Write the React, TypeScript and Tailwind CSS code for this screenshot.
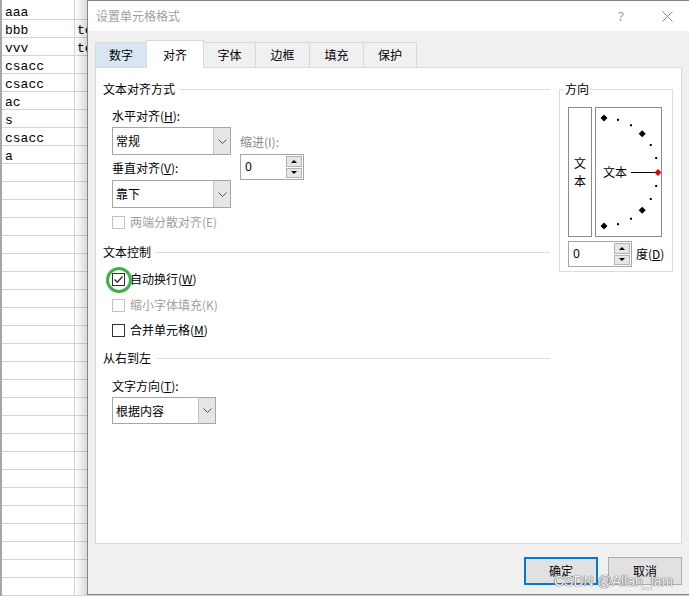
import React from "react";

const ui = "font-['Noto_Sans_CJK_SC','Noto_Sans',sans-serif]";

const colA = ["aaa", "bbb", "vvv", "csacc", "csacc", "ac", "s", "csacc", "a"];
const colB = ["", "test", "test"];

function Sheet() {
	const rows = Array.from({ length: 33 }, (_, i) => i);
	const cols = Array.from({ length: 8 }, (_, i) => i);
	return (
		<div className="flex flex-col border-l-2 border-[#a6a6a6] font-['Liberation_Mono',monospace] text-[13px] leading-[13px] text-black">
			{rows.map((r) => (
				<div key={r} className={`flex border-b border-[#d4d4d4] ${r === 0 ? "h-[20px]" : "h-[18px]"}`}>
					<div className="flex w-[73px] shrink-0 items-end overflow-hidden border-r border-[#d4d4d4] pl-[3px]">{colA[r] ?? ""}</div>
					<div className="flex w-[72px] shrink-0 items-end overflow-hidden border-r border-[#d4d4d4] pl-[2px]">{colB[r] ?? ""}</div>
					{cols.map((c) => (
						<div key={c} className="w-[72px] shrink-0 border-r border-[#d4d4d4]" />
					))}
				</div>
			))}
		</div>
	);
}

function Chevron() {
	return (
		<svg width="9" height="5" viewBox="0 0 9 5">
			<polyline points="0.5,0.5 4.5,4.5 8.5,0.5" fill="none" stroke="#555" strokeWidth="1" />
		</svg>
	);
}

function Combo({ value, w, h = "h-[28px]" }: { value: string; w: string; h?: string }) {
	return (
		<div className={`flex border border-[#a6a6a6] bg-white ${w} ${h}`}>
			<span className="flex flex-1 items-center pl-[3px]">{value}</span>
			<span className="flex w-[17px] items-center justify-center border-l border-[#c2c2c2] bg-[#e5e5e5]">
				<Chevron />
			</span>
		</div>
	);
}

function Spin() {
	return (
		<div className="flex h-[26px] w-[64px] border border-[#a6a6a6] bg-white">
			<span className="flex flex-1 items-center pl-[4px] font-['Noto_Sans',sans-serif]">0</span>
			<div className="flex w-[17px] flex-col gap-px py-px pr-px">
				<span className="flex flex-1 items-center justify-center border border-[#b4b4b4] bg-[#e6e6e6]">
					<svg width="6" height="3" viewBox="0 0 6 3">
						<polygon points="0,3 3,0 6,3" fill="#000" />
					</svg>
				</span>
				<span className="flex flex-1 items-center justify-center border border-[#b4b4b4] bg-[#e6e6e6]">
					<svg width="6" height="3" viewBox="0 0 6 3">
						<polygon points="0,0 6,0 3,3" fill="#000" />
					</svg>
				</span>
			</div>
		</div>
	);
}

function Header({ label, mt }: { label: string; mt: string }) {
	return (
		<div className={`flex h-[16px] items-center gap-[5px] ${mt}`}>
			<span>{label}</span>
			<span className="h-px flex-1 bg-[#dcdcdc]" />
		</div>
	);
}

function Check({ label, checked, disabled, circled, mt }: { label: React.ReactNode; checked?: boolean; disabled?: boolean; circled?: boolean; mt: string }) {
	return (
		<div className={`flex h-[16px] items-center ${mt} ${disabled ? "text-[#a0a0a0]" : ""}`}>
			<span className={`relative flex h-[13px] w-[13px] items-center justify-center border bg-white ${disabled ? "border-[#c3c3c3]" : "border-[#333]"}`}>
				{checked && (
					<svg width="11" height="11" viewBox="0 0 11 11">
						<polyline points="1.5,5.5 4.3,8.3 9.5,2.5" fill="none" stroke="#333" strokeWidth="1.4" />
					</svg>
				)}
				{circled && <span className="absolute -left-[7px] -top-[7px] h-[26px] w-[26px] rounded-full border-[3.5px] border-[#3cb14a]" />}
			</span>
			<span className="ml-[5px]">{label}</span>
		</div>
	);
}

function Dial() {
	const cx = 8;
	const cy = 64;
	const r = 54;
	const pt = (a: number) => [cx + r * Math.cos((a * Math.PI) / 180), cy - r * Math.sin((a * Math.PI) / 180)];
	const diamonds = [90, 45, -45, -90];
	const dots = [75, 60, 30, 15, -15, -30, -60, -75];
	const dia = (x: number, y: number) => `${x},${y - 3.5} ${x + 3.5},${y} ${x},${y + 3.5} ${x - 3.5},${y}`;
	return (
		<div className="relative h-[130px] w-[67px] border border-[#8c8c8c] bg-white">
			<svg className="absolute inset-0" width="65" height="128" viewBox="0 0 65 128">
				{diamonds.map((a) => {
					const [x, y] = pt(a);
					return <polygon key={a} points={dia(x, y)} fill="#000" />;
				})}
				{dots.map((a) => {
					const [x, y] = pt(a);
					return <rect key={a} x={x - 1} y={y - 1} width="2" height="2" fill="#000" />;
				})}
				<line x1="35" y1="64.5" x2="59" y2="64.5" stroke="#000" strokeWidth="1" />
				<polygon points={dia(62, 64.5)} fill="#e00000" />
			</svg>
			<span className="absolute left-[7px] top-[56px] leading-[16px]">文本</span>
		</div>
	);
}

export default function App() {
	return (
		<div className={`relative h-[598px] w-[689px] overflow-hidden bg-white ${ui} text-[12px] leading-[16px] text-black`}>
			<Sheet />
			<div className="absolute left-[75px] top-0 h-[595px] w-[12px] bg-linear-to-r from-black/0 to-black/15" />

			<div className="absolute left-[87px] top-0 flex h-[595px] w-[613px] flex-col border border-[#858585] bg-[#f0f0f0]">
				<div className="flex h-[30px] shrink-0 items-center bg-white pr-[9px]">
					<span className="pl-[8px] text-[#a0a0a0]">设置单元格格式</span>
					<span className="ml-auto w-[46px] text-center font-['Noto_Sans',sans-serif] text-[13px] text-[#9a9a9a]">?</span>
					<span className="flex w-[46px] justify-center">
						<svg width="11" height="11" viewBox="0 0 11 11">
							<path d="M0.5 0.5 L10.5 10.5 M10.5 0.5 L0.5 10.5" stroke="#8a8a8a" strokeWidth="1" />
						</svg>
					</span>
				</div>

				<div className="flex flex-col pl-[7px] pt-[9px]">
					<div className="relative z-10 flex h-[27px] items-end">
						<span className="flex h-[25px] w-[52px] items-center justify-center border border-b-0 border-[#d9d9d9] bg-[#d8e6f3]">数字</span>
						<span className="-mb-px -ml-px flex h-[28px] w-[58px] items-center justify-center border border-b-0 border-[#d9d9d9] bg-white">对齐</span>
						<span className="-ml-px flex h-[25px] w-[53px] items-center justify-center border border-b-0 border-[#d9d9d9]">字体</span>
						<span className="-ml-px flex h-[25px] w-[55px] items-center justify-center border border-b-0 border-[#d9d9d9]">边框</span>
						<span className="-ml-px flex h-[25px] w-[55px] items-center justify-center border border-b-0 border-[#d9d9d9]">填充</span>
						<span className="-ml-px flex h-[25px] w-[54px] items-center justify-center border border-b-0 border-[#d9d9d9]">保护</span>
					</div>

					<div className="flex h-[477px] w-[587px] items-start gap-[9px] border border-[#d9d9d9] bg-white pl-[7px] pt-[13px]">
						<div className="flex w-[447px] flex-col">
							<Header label="文本对齐方式" mt="" />
							<div className="flex flex-col pl-[9px]">
								<div className="mt-[11px] flex h-[16px] items-center">
									水平对齐(<u>H</u>):
								</div>
								<div className="flex gap-[9px]">
									<div className="flex flex-col">
										<div className="mt-[3px]">
											<Combo value="常规" w="w-[119px]" />
										</div>
										<div className="mt-[5px] flex h-[16px] items-center">
											垂直对齐(<u>V</u>):
										</div>
										<div className="mt-[4px]">
											<Combo value="靠下" w="w-[119px]" />
										</div>
									</div>
									<div className="flex flex-col">
										<div className="mt-[10px] flex h-[16px] items-center text-[#8a8a8a]">缩进(I):</div>
										<div className="mt-[4px]">
											<Spin />
										</div>
									</div>
								</div>
								<Check label="两端分散对齐(E)" disabled mt="mt-[6px]" />
							</div>

							<Header label="文本控制" mt="mt-[14px]" />
							<div className="flex flex-col pl-[9px]">
								<Check label={<>自动换行(<u>W</u>)</>} checked circled mt="mt-[11px]" />
								<Check label="缩小字体填充(K)" disabled mt="mt-[10px]" />
								<Check label={<>合并单元格(<u>M</u>)</>} mt="mt-[9px]" />
							</div>

							<Header label="从右到左" mt="mt-[12px]" />
							<div className="flex flex-col pl-[9px]">
								<div className="mt-[12px] flex h-[16px] items-center">
									文字方向(<u>T</u>):
								</div>
								<div className="mt-[3px]">
									<Combo value="根据内容" w="w-[104px]" h="h-[27px]" />
								</div>
							</div>
						</div>

						<fieldset className="w-[114px] border border-[#dcdcdc]">
							<legend className="ml-[4px] px-[1px] leading-[16px]">方向</legend>
							<div className="flex flex-col pb-[4px] pl-[8px] pt-[10px]">
								<div className="flex gap-[3px]">
									<div className="flex h-[130px] w-[24px] flex-col items-center justify-center border border-[#8c8c8c] leading-[18px]">
										<span>文</span>
										<span>本</span>
									</div>
									<Dial />
								</div>
								<div className="mt-[4px] flex items-center gap-[4px]">
									<Spin />
									<span>
										度(<u>D</u>)
									</span>
								</div>
							</div>
						</fieldset>
					</div>

					<div className="mt-[13px] flex w-[587px] justify-end gap-[10px]">
						<span className="flex h-[28px] w-[74px] items-center justify-center border-2 border-[#0078d7] bg-[#e1e1e1]">确定</span>
						<span className="flex h-[28px] w-[74px] items-center justify-center border border-[#adadad] bg-[#e1e1e1]">取消</span>
					</div>
				</div>
			</div>

			<span className="absolute left-[554px] top-[572px] font-['Liberation_Sans',sans-serif] text-[14px] leading-[18px] text-[#f4f4f4] [text-shadow:0_0_1px_#6e6e6e,0_0_1px_#6e6e6e,0_0_1px_#6e6e6e]">
				CSDN @Allan_lam
			</span>
		</div>
	);
}
